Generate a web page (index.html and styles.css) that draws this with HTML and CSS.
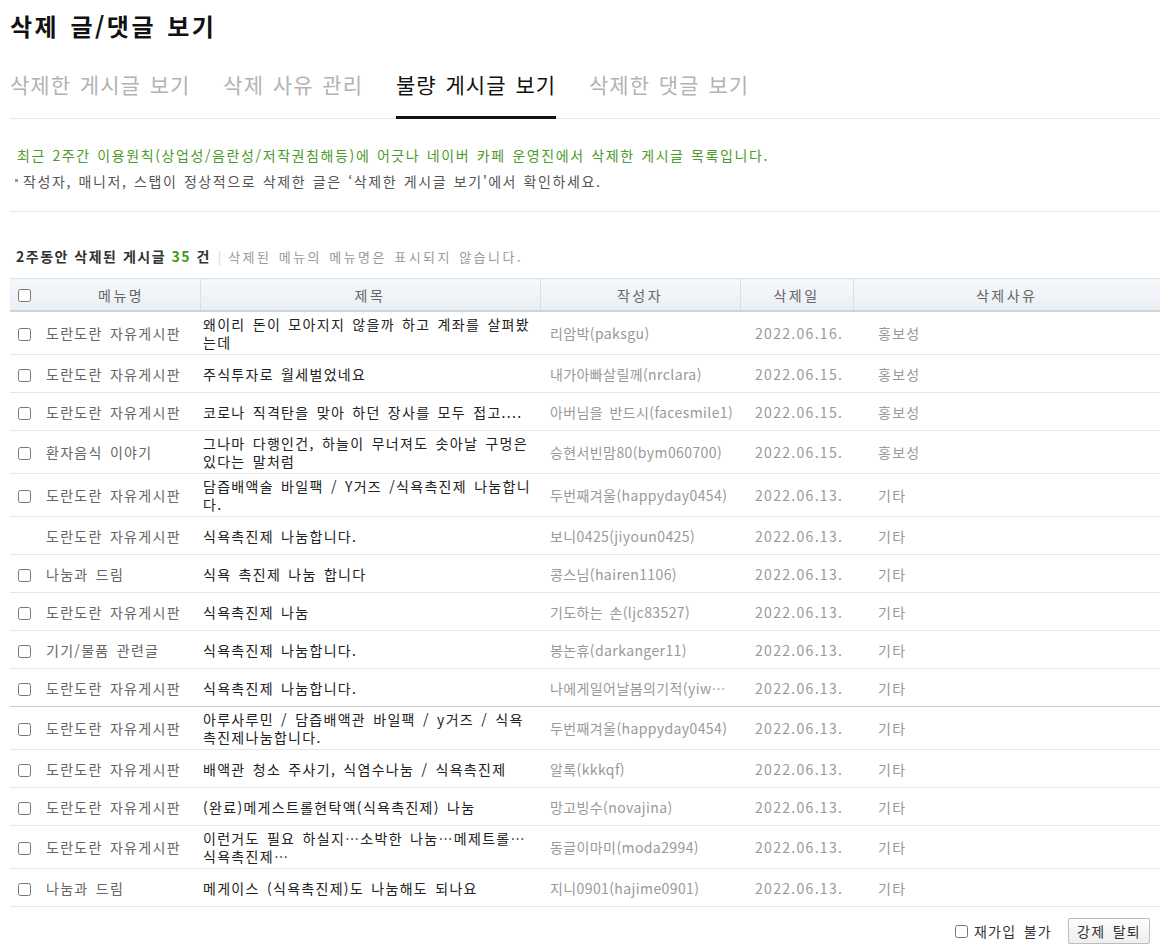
FILE: index.html
```html
<!DOCTYPE html>
<html lang="ko">

<head>
    <meta charset="UTF-8">
    <meta name="viewport" content="width=device-width, initial-scale=1.0">
    <title>삭제 글/댓글 보기</title>
    <link rel="stylesheet" href="styles.css">
</head>

<body>
    <div class="wrap">
        <h1 class="page-title">삭제 글/댓글 보기</h1>

        <ul class="tabs">
            <li class="tab">삭제한 게시글 보기</li>
            <li class="tab">삭제 사유 관리</li>
            <li class="tab on">불량 게시글 보기</li>
            <li class="tab">삭제한 댓글 보기</li>
        </ul>

        <div class="notice">
            <p class="notice-main">최근 2주간 이용원칙(상업성/음란성/저작권침해등)에 어긋나 네이버 카페 운영진에서 삭제한 게시글 목록입니다.</p>
            <p class="notice-sub">작성자, 매니저, 스탭이 정상적으로 삭제한 글은 ‘삭제한 게시글 보기’에서 확인하세요.</p>
        </div>

        <div class="summary">
            <strong>2주동안 삭제된 게시글 <em>35</em> 건</strong>
            <span class="bar">|</span>
            <span class="summary-desc">삭제된 메뉴의 메뉴명은 표시되지 않습니다.</span>
        </div>

        <table class="list">
            <colgroup>
                <col style="width: 190px">
                <col style="width: 340px">
                <col style="width: 200px">
                <col style="width: 113px">
                <col>
            </colgroup>
            <thead>
                <tr>
                    <th class="th-menu"><input type="checkbox"><span>메뉴명</span></th>
                    <th>제목</th>
                    <th>작성자</th>
                    <th>삭제일</th>
                    <th>삭제사유</th>
                </tr>
            </thead>
            <tbody>
                <tr>
                    <td class="menu"><input type="checkbox">도란도란 자유게시판</td>
                    <td class="subject">왜이리 돈이 모아지지 않을까 하고 계좌를 살펴봤는데</td>
                    <td class="writer">리암박(paksgu)</td>
                    <td class="date">2022.06.16.</td>
                    <td class="reason">홍보성</td>
                </tr>
                <tr>
                    <td class="menu"><input type="checkbox">도란도란 자유게시판</td>
                    <td class="subject">주식투자로 월세벌었네요</td>
                    <td class="writer">내가아빠살릴께(nrclara)</td>
                    <td class="date">2022.06.15.</td>
                    <td class="reason">홍보성</td>
                </tr>
                <tr>
                    <td class="menu"><input type="checkbox">도란도란 자유게시판</td>
                    <td class="subject">코로나 직격탄을 맞아 하던 장사를 모두 접고....</td>
                    <td class="writer">아버님을 반드시(facesmile1)</td>
                    <td class="date">2022.06.15.</td>
                    <td class="reason">홍보성</td>
                </tr>
                <tr>
                    <td class="menu"><input type="checkbox">환자음식 이야기</td>
                    <td class="subject">그나마 다행인건, 하늘이 무너져도 솟아날 구멍은 있다는 말처럼</td>
                    <td class="writer">승현서빈맘80(bym060700)</td>
                    <td class="date">2022.06.15.</td>
                    <td class="reason">홍보성</td>
                </tr>
                <tr>
                    <td class="menu"><input type="checkbox">도란도란 자유게시판</td>
                    <td class="subject">담즙배액술 바일팩 / Y거즈 /식욕촉진제 나눔합니다.</td>
                    <td class="writer">두번째겨울(happyday0454)</td>
                    <td class="date">2022.06.13.</td>
                    <td class="reason">기타</td>
                </tr>
                <tr>
                    <td class="menu"><span class="no-chk"></span>도란도란 자유게시판</td>
                    <td class="subject">식욕촉진제 나눔합니다.</td>
                    <td class="writer">보니0425(jiyoun0425)</td>
                    <td class="date">2022.06.13.</td>
                    <td class="reason">기타</td>
                </tr>
                <tr>
                    <td class="menu"><input type="checkbox">나눔과 드림</td>
                    <td class="subject">식욕 촉진제 나눔 합니다</td>
                    <td class="writer">콩스님(hairen1106)</td>
                    <td class="date">2022.06.13.</td>
                    <td class="reason">기타</td>
                </tr>
                <tr>
                    <td class="menu"><input type="checkbox">도란도란 자유게시판</td>
                    <td class="subject">식욕촉진제 나눔</td>
                    <td class="writer">기도하는 손(ljc83527)</td>
                    <td class="date">2022.06.13.</td>
                    <td class="reason">기타</td>
                </tr>
                <tr>
                    <td class="menu"><input type="checkbox">기기/물품 관련글</td>
                    <td class="subject">식욕촉진제 나눔합니다.</td>
                    <td class="writer">봉논휴(darkanger11)</td>
                    <td class="date">2022.06.13.</td>
                    <td class="reason">기타</td>
                </tr>
                <tr class="page-end">
                    <td class="menu"><input type="checkbox">도란도란 자유게시판</td>
                    <td class="subject">식욕촉진제 나눔합니다.</td>
                    <td class="writer">나에게일어날봄의기적(yiw…</td>
                    <td class="date">2022.06.13.</td>
                    <td class="reason">기타</td>
                </tr>
                <tr>
                    <td class="menu"><input type="checkbox">도란도란 자유게시판</td>
                    <td class="subject">아루사루민 / 담즙배액관 바일팩 / y거즈 / 식욕촉진제나눔합니다.</td>
                    <td class="writer">두번째겨울(happyday0454)</td>
                    <td class="date">2022.06.13.</td>
                    <td class="reason">기타</td>
                </tr>
                <tr>
                    <td class="menu"><input type="checkbox">도란도란 자유게시판</td>
                    <td class="subject">배액관 청소 주사기, 식염수나눔 / 식욕촉진제</td>
                    <td class="writer">알록(kkkqf)</td>
                    <td class="date">2022.06.13.</td>
                    <td class="reason">기타</td>
                </tr>
                <tr>
                    <td class="menu"><input type="checkbox">도란도란 자유게시판</td>
                    <td class="subject">(완료)메게스트롤현탁액(식욕촉진제) 나눔</td>
                    <td class="writer">망고빙수(novajina)</td>
                    <td class="date">2022.06.13.</td>
                    <td class="reason">기타</td>
                </tr>
                <tr>
                    <td class="menu"><input type="checkbox">도란도란 자유게시판</td>
                    <td class="subject">이런거도 필요 하실지…소박한 나눔…메제트롤…식욕촉진제…</td>
                    <td class="writer">동글이마미(moda2994)</td>
                    <td class="date">2022.06.13.</td>
                    <td class="reason">기타</td>
                </tr>
                <tr>
                    <td class="menu"><input type="checkbox">나눔과 드림</td>
                    <td class="subject">메게이스 (식욕촉진제)도 나눔해도 되나요</td>
                    <td class="writer">지니0901(hajime0901)</td>
                    <td class="date">2022.06.13.</td>
                    <td class="reason">기타</td>
                </tr>
            </tbody>
        </table>

        <div class="bottom">
            <label class="rejoin"><input type="checkbox">재가입 불가</label>
            <button class="btn-kick">강제 탈퇴</button>
        </div>
    </div>
</body>

</html>
```

FILE: styles.css
```css
body {
    margin: 0;
    background-color: #fff;
    font-family: "Noto Sans CJK KR", "Noto Sans", sans-serif;
    color: #333;
}

.wrap {
    margin: 0 10px;
}

/* 페이지 제목 */
.page-title {
    margin: 0;
    padding-top: 10px;
    font-size: 24px;
    line-height: 32px;
    font-weight: bold;
    color: #111;
    letter-spacing: 2.5px;
    word-spacing: 2px;
}

/* 탭 메뉴 */
.tabs {
    display: flex;
    gap: 33px;
    margin: 27px 0 0 0;
    padding: 0;
    list-style: none;
    border-bottom: 1px solid #e6e6e6;
}

.tab {
    padding-bottom: 17px;
    margin-bottom: -1px;
    border-bottom: 3px solid transparent;
    font-size: 21px;
    line-height: 30px;
    color: #b3b3b3;
    letter-spacing: 1px;
    word-spacing: 2px;
}

.tab.on {
    color: #111;
    border-bottom-color: #111;
}

/* 안내 문구 */
.notice {
    padding: 23px 0 17px 7px;
    border-bottom: 1px solid #e6e6e6;
}

.notice p {
    margin: 0;
    font-size: 14px;
    line-height: 26px;
    letter-spacing: 1.6px;
    word-spacing: 1px;
}

.notice-main {
    color: #4c9a2a;
}

.notice-sub {
    position: relative;
    padding-left: 6px;
    color: #555;
}

.notice-sub::before {
    content: "";
    position: absolute;
    left: -2px;
    top: 11px;
    width: 3px;
    height: 3px;
    background-color: #999;
}

/* 게시글 수 */
.summary {
    margin: 34px 0 11px 0;
    padding-left: 6px;
    font-size: 14px;
    line-height: 20px;
}

.summary strong {
    color: #333;
    letter-spacing: 1.5px;
}

.summary em {
    font-style: normal;
    color: #3d9a1a;
}

.summary .bar {
    margin: 0 3px;
    font-size: 13px;
    color: #d5d5d5;
}

.summary-desc {
    font-size: 13px;
    color: #999;
    letter-spacing: 2.5px;
    word-spacing: 1px;
}

/* 목록 테이블 */
.list {
    width: 100%;
    table-layout: fixed;
    border-collapse: collapse;
    font-size: 14px;
    letter-spacing: 1.3px;
}

.list th {
    height: 31px;
    padding: 0;
    background: linear-gradient(#f6f8fb, #eaeff4);
    border-top: 1px solid #dde2e8;
    border-bottom: 2px solid #cdd4db;
    border-left: 1px solid #d9e0e6;
    font-weight: normal;
    color: #666;
    text-align: center;
    letter-spacing: 2.5px;
}

.list th:first-child {
    border-left: 0;
}

.th-menu {
    text-align: left !important;
    white-space: nowrap;
}

.th-menu input {
    margin: 0 0 0 8px;
    vertical-align: -1px;
}

.th-menu span {
    margin-left: 67px;
}

.list td {
    height: 31px;
    padding: 3px 0;
    border-bottom: 1px solid #e6e6e6;
    line-height: 18px;
    vertical-align: middle;
    word-spacing: 2px;
}

.list .page-end td {
    border-bottom-color: #c8c8c8;
}

.list .menu {
    padding-left: 8px;
    color: #666;
    white-space: nowrap;
}

.list .menu input,
.list .menu .no-chk {
    margin: 0 15px 0 0;
    vertical-align: -2px;
}

.no-chk {
    display: inline-block;
    width: 13px;
}

.list .subject {
    padding: 3px 6px 3px 3px;
    color: #222;
}

.list .writer {
    padding-left: 10px;
    color: #999;
    white-space: nowrap;
    overflow: hidden;
    letter-spacing: 0.4px;
}

.list .date {
    padding-left: 15px;
    color: #999;
}

.list .reason {
    padding-left: 25px;
    color: #999;
}

/* 하단 버튼 */
.bottom {
    display: flex;
    justify-content: flex-end;
    align-items: center;
    gap: 16px;
    margin-top: 11px;
    padding-right: 10px;
}

.rejoin {
    display: flex;
    align-items: center;
    gap: 6px;
    font-size: 14px;
    color: #333;
    letter-spacing: 1.3px;
    word-spacing: 2px;
}

.rejoin input {
    margin: 0;
}

.btn-kick {
    height: 26px;
    padding: 0 8px;
    border: 1px solid #bdbdbd;
    border-radius: 2px;
    background: linear-gradient(#fdfdfd, #eeeeee);
    font-family: inherit;
    font-size: 14px;
    color: #333;
    letter-spacing: 1.3px;
    word-spacing: 2px;
}
```
